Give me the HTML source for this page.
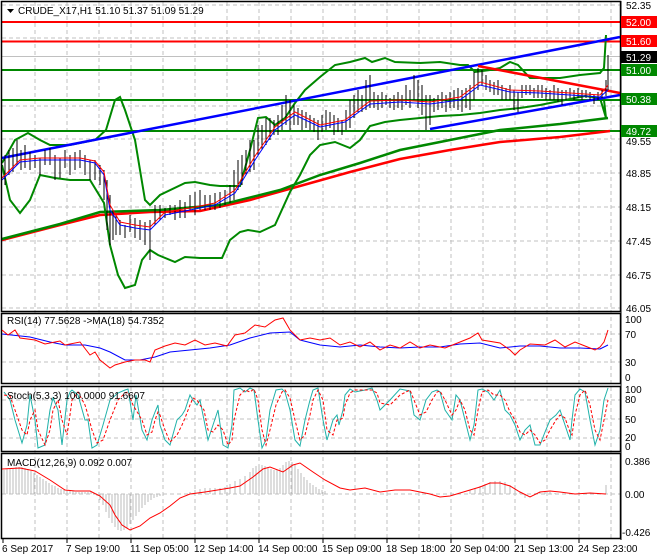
<!DOCTYPE html>
<html><head><meta charset="utf-8"><style>
html,body{margin:0;padding:0;background:#fff;width:660px;height:560px;overflow:hidden}
svg text{font-family:"Liberation Sans",sans-serif;font-size:10px;fill:#000}
</style></head><body>
<svg width="660" height="560" viewBox="0 0 660 560" xmlns="http://www.w3.org/2000/svg">
<rect width="660" height="560" fill="#fff"/>
<!-- grid -->
<g stroke="#c0c0c0" stroke-dasharray="4,3" stroke-width="1">
<path d="M35 2V539M67 2V539M99 2V539M131 2V539M163 2V539M195 2V539M227 2V539M259 2V539M291 2V539M323 2V539M355 2V539M387 2V539M419 2V539M451 2V539M483 2V539M515 2V539M547 2V539M579 2V539M611 2V539"/>
<path d="M2 5H620M2 38H620M2 106H620M2 139H620M2 173H620M2 207H620M2 241H620M2 275H620M2 308H620"/>
<path d="M2 334H620M2 362H620M2 400H620M2 419H620M2 438H620M2 494H620"/>
</g>
<line x1="2" y1="56.5" x2="620" y2="56.5" stroke="#c0c0c0"/>
<!-- levels -->
<g stroke-width="2">
<line x1="2" y1="22" x2="620" y2="22" stroke="#f00"/>
<line x1="2" y1="41.5" x2="620" y2="41.5" stroke="#f00"/>
<line x1="2" y1="70" x2="620" y2="70" stroke="#080"/>
<line x1="2" y1="100" x2="620" y2="100" stroke="#080"/>
<line x1="2" y1="131" x2="620" y2="131" stroke="#080"/>
</g>
<!-- MAs -->
<polyline fill="none" stroke="#f00" stroke-width="2.5" points="2,240 60,225 100,215 150,212 200,211 250,200 300,186 350,172 400,159 450,150 500,142 560,137 610,131"/>
<polyline fill="none" stroke="#080" stroke-width="2.5" points="2,239 60,224 100,212 160,210 220,205 280,190 320,175 360,163 400,150 450,140 500,130 560,124 608,118"/>
<!-- bollinger -->
<polyline fill="none" stroke="#080" stroke-width="2" points="2,163 15,140 28,133 40,140 50,145 70,145 95,140 106,130 115,100 120,97 125,110 135,140 145,200 150,205 160,195 185,183 195,182 210,185 220,186 240,186 250,150 258,118 266,117 275,125 285,118 295,103 305,90 320,77 335,65 350,62 365,58 372,62 385,58 395,62 420,63 440,62 460,65 468,65 475,72 490,70 500,68 510,62 518,65 530,78 545,78 560,78 580,75 600,73 604,68 606,35"/>
<polyline fill="none" stroke="#080" stroke-width="2" points="2,165 10,200 20,213 30,200 40,175 55,178 70,180 90,180 104,203 110,245 118,275 125,288 135,285 142,260 150,250 158,255 175,262 185,257 200,258 215,258 222,258 230,240 240,232 248,230 260,232 275,225 290,192 300,175 310,155 320,145 335,142 350,148 360,140 370,126 385,122 400,120 420,118 440,116 460,115 480,113 500,110 520,108 540,105 560,101 585,96 600,98 606,118 604,100"/>
<!-- trendlines -->
<line x1="2" y1="158" x2="620" y2="37" stroke="#00f" stroke-width="2.5"/>
<line x1="430" y1="129" x2="620" y2="95" stroke="#00f" stroke-width="2.5"/>
<line x1="478" y1="66" x2="620" y2="93" stroke="#f00" stroke-width="2.5"/>
<!-- candles -->
<g stroke="#000" stroke-width="1">
<path d="M5 155V185M9 150V175M13 148V172M17 140V165M21 150V170M25 145V168M30 152V170M35 155V168M40 158V175M45 150V165M50 148V165M55 155V180M60 158V178M65 150V168M70 155V175M75 152V170M80 150V168M85 155V175M90 160V180M95 160V180M100 165V185M104 170V200M107 180V230M110 195V245M113 210V240M116 215V235M120 220V235M125 225V238M130 215V232M135 218V238M140 220V240M145 222V245M150 220V260M155 205V225M160 205V220M165 208V218M170 205V215M175 205V220M180 200V218M185 202V218M190 195V210M195 192V215M200 190V210M205 195V210M210 195V210M215 193V210M220 192V208M225 190V205M230 185V203M234 170V200M238 160V190M242 155V185M246 150V175M250 140V172M254 140V170M258 125V155M262 125V150M266 118V145M270 118V140M274 120V135M278 115V135M282 105V130M286 95V125M290 100V130M294 105V125M298 108V125M302 110V130M306 112V128M310 115V130M314 118V132M318 120V140M322 115V132M326 110V130M330 112V128M334 115V135M338 118V132M342 120V135M346 110V130M350 100V128M354 95V118M358 90V112M362 95V112M366 80V110M370 75V108M374 92V108M378 95V110M382 92V108M386 95V105M390 98V108M394 95V110M398 92V108M402 95V110M406 85V105M410 90V108M414 75V100M418 80V108M422 85V115M426 95V130M430 95V125M434 98V112M438 95V110M442 92V108M446 95V112M450 92V108M454 90V108M458 88V110M462 90V112M466 88V108M470 85V110M474 72V100M478 68V90M482 70V85M486 75V90M490 80V92M494 82V95M498 80V95M502 85V100M506 88V100M510 85V100M514 90V110M518 92V112M522 85V98M526 85V95M530 85V95M534 88V98M538 85V98M542 85V98M546 88V100M550 90V100M554 85V100M558 88V102M562 90V105M566 90V100M570 88V98M574 90V100M578 88V98M582 90V100M586 90V98M590 92V100M594 95V104M598 92V100M602 90V98M606 80V96M608 55V90"/>
</g>
<polyline fill="none" stroke="#00f" stroke-width="1" points="2,180 20,162 40,160 60,160 80,160 95,163 104,175 110,210 120,225 135,228 150,230 165,215 190,210 215,205 235,193 255,160 275,130 295,115 320,127 345,122 370,104 400,102 430,104 460,100 480,85 510,92 540,93 570,95 600,97 608,90"/>
<polyline fill="none" stroke="#f00" stroke-width="1" points="2,178 20,160 40,158 60,158 80,158 95,161 104,172 110,205 120,222 135,225 150,227 165,212 190,208 215,203 235,190 255,156 275,127 295,112 320,125 345,120 370,101 400,100 430,102 460,97 480,82 510,90 540,91 570,93 600,95 608,85"/>
<!-- frames -->
<g fill="none" stroke="#000" stroke-width="1.5">
<rect x="1.5" y="1.5" width="619" height="310"/>
<rect x="1.5" y="313.5" width="619" height="70"/>
<rect x="1.5" y="386.5" width="619" height="65"/>
<rect x="1.5" y="453.5" width="619" height="85"/>
</g>
<line x1="621" y1="1" x2="621" y2="540" stroke="#000"/>
<!-- header -->
<path d="M7 9L14 9L10.5 13Z" fill="#000"/>
<text x="18" y="14">CRUDE_X17,H1  51.10 51.37 51.09 51.29</text>
<!-- price labels -->
<g font-size="10">
<text x="626" y="9">52.35</text>
<text x="626" y="145">49.55</text>
<text x="626" y="177">48.85</text>
<text x="626" y="211">48.15</text>
<text x="626" y="245">47.45</text>
<text x="626" y="279">46.75</text>
<text x="626" y="312">46.05</text>
</g>
<rect x="621" y="16" width="36" height="12" fill="#f00"/><text x="626" y="26" style="fill:#fff">52.00</text>
<rect x="621" y="35" width="36" height="12" fill="#f00"/><text x="626" y="45" style="fill:#fff">51.60</text>
<rect x="621" y="51" width="36" height="12" fill="#000"/><text x="626" y="61" style="fill:#fff">51.29</text>
<rect x="621" y="64" width="36" height="12" fill="#080"/><text x="626" y="74" style="fill:#fff">51.00</text>
<rect x="621" y="93" width="36" height="12" fill="#080"/><text x="626" y="103" style="fill:#fff">50.38</text>
<rect x="621" y="125" width="36" height="12" fill="#080"/><text x="626" y="135" style="fill:#fff">49.72</text>
<!-- RSI -->
<text x="7" y="324">RSI(14) 77.5628  -&gt;MA(18) 54.7352</text>
<polyline fill="none" stroke="#00f" points="2,334 30,337 50,342 65,345 85,345 100,348 110,352 125,360 140,360 155,357 170,352 190,350 210,348 230,345 250,338 270,333 290,332 300,340 320,345 340,347 360,345 380,347 400,348 420,347 440,347 460,344 480,343 500,348 520,346 540,346 560,348 580,348 600,349 608,345"/>
<polyline fill="none" stroke="#f00" points="2,330 8,335 15,330 20,338 35,340 45,344 60,341 65,345 80,342 90,355 95,352 100,360 110,368 115,365 125,362 135,360 145,360 150,362 155,350 165,346 175,343 185,345 195,340 205,345 215,343 227,346 235,335 245,333 255,325 265,327 275,320 283,318 290,330 300,340 310,338 320,340 330,338 340,345 350,342 360,347 370,342 380,350 390,345 400,348 410,342 420,348 430,345 445,348 460,342 470,338 478,333 482,340 500,343 510,350 515,355 520,350 530,344 545,345 555,340 565,347 575,342 585,346 595,350 600,347 604,342 608,330"/>
<g font-size="10"><text x="625" y="323">100</text><text x="625" y="338">70</text><text x="625" y="366">30</text><text x="625" y="381">0</text></g>
<!-- Stoch -->
<polyline fill="none" stroke="#20b2aa" points="4,392 10,400 15,420 22,443 27,425 30,395 35,420 38,448 45,445 50,410 53,398 58,410 62,445 67,400 70,392 72,390 78,395 85,420 88,420 92,448 97,445 103,425 110,400 118,393 125,390 128,389 133,420 136,395 142,430 147,440 152,420 155,412 158,405 160,425 165,440 170,445 177,420 182,415 185,410 190,395 193,400 197,405 200,400 204,420 208,440 213,425 218,410 223,445 228,448 232,425 234,390 240,388 245,392 250,388 254,390 258,420 262,448 266,440 270,410 276,390 282,389 285,392 290,410 295,440 300,446 305,420 310,400 313,390 318,388 323,420 327,440 333,420 337,415 339,425 343,410 345,395 350,389 355,392 365,390 372,388 377,400 380,410 390,400 400,389 410,391 414,415 420,420 426,400 432,392 437,390 440,392 445,410 452,420 456,395 460,400 465,420 470,440 474,425 478,390 482,389 488,392 494,400 500,390 505,410 510,415 515,425 520,440 525,430 530,425 535,445 540,445 545,432 550,420 556,415 560,410 565,425 570,440 572,420 575,395 580,389 585,392 590,420 595,445 600,430 604,400 608,388"/>
<polyline fill="none" stroke="#f00" stroke-dasharray="3,2" points="4,395 10,396 15,410 22,430 27,435 30,420 35,410 38,430 45,445 50,430 53,410 58,400 62,420 67,435 70,415 72,400 78,392 85,405 88,415 92,430 97,443 103,440 110,420 118,400 125,393 128,392 133,405 136,410 142,420 147,435 152,432 155,420 158,412 160,415 165,430 170,442 177,435 182,425 185,418 190,405 193,398 197,400 200,405 204,410 208,430 213,432 218,425 223,430 228,445 232,440 234,420 240,395 245,390 250,392 254,389 258,400 262,430 266,445 270,430 276,405 282,392 285,390 290,398 295,420 300,440 305,435 310,415 313,400 318,390 323,400 327,430 333,435 337,420 339,420 343,418 345,405 350,393 355,390 365,390 372,390 377,393 380,403 390,405 400,395 410,390 414,400 420,415 426,412 432,400 437,392 440,391 445,400 452,415 456,410 460,400 465,410 470,430 474,435 478,410 482,392 488,390 494,395 500,395 505,400 510,412 515,420 520,432 525,435 530,430 535,435 540,443 545,440 550,430 556,420 560,415 565,418 570,432 572,435 575,415 580,395 585,390 590,405 595,430 600,440 604,420 608,400"/>
<g font-size="10"><text x="7" y="399">Stoch(5,3,3) 100.0000 91.6607</text>
<text x="625" y="393">100</text><text x="625" y="403">80</text><text x="625" y="423">50</text><text x="625" y="441">20</text><text x="625" y="450">0</text></g>
<!-- MACD -->
<g stroke="#bbb" stroke-width="1">
<path d="M4 494V470M7 494V469M10 494V469M13 494V468M16 494V467M19 494V467M22 494V467M25 494V468M28 494V469M31 494V471M34 494V473M37 494V475M40 494V477M43 494V479M46 494V481M49 494V483M52 494V485M55 494V486M58 494V488M61 494V489M64 494V490M67 494V490M70 494V491M73 494V491M76 494V492M79 494V492M82 494V492M85 494V492M88 494V492M91 494V492M94 494V493M97 494V496M100 494V500M103 494V505M106 494V512M109 494V518M112 494V523M115 494V527M118 494V530M121 494V531M124 494V530M127 494V528M130 494V524M133 494V520M136 494V516M139 494V512M142 494V508M145 494V505M148 494V502M151 494V500M154 494V498M157 494V497M160 494V496M163 494V495M190 494V492M195 494V490M200 494V489M205 494V488M210 494V488M215 494V488M220 494V488M225 494V487M230 494V484M235 494V481M240 494V479M245 494V476M250 494V472M253 494V468M256 494V466M259 494V465M262 494V465M265 494V466M268 494V467M271 494V469M274 494V470M277 494V470M280 494V468M283 494V465M286 494V462M289 494V461M292 494V462M295 494V465M298 494V469M301 494V473M304 494V477M307 494V480M310 494V483M313 494V485M316 494V487M319 494V489M322 494V490M325 494V491M470 494V490M475 494V488M480 494V486M485 494V484M490 494V482M495 494V481M500 494V481M505 494V482M510 494V485M515 494V488M520 494V492M525 494V498M530 494V494M535 494V493M540 494V492M545 494V491M550 494V492M555 494V493M560 494V494M606 494V485"/>
</g>
<polyline fill="none" stroke="#f00" stroke-width="1" points="2,469 20,468 35,471 50,480 65,490 75,491 90,491 100,496 110,505 115,515 122,525 130,530 140,526 150,518 160,513 170,506 180,498 190,494 205,492 230,488 240,486 253,477 263,469 270,467 283,472 293,465 300,463 313,472 325,480 340,488 350,490 365,488 380,492 395,490 410,490 430,494 440,497 450,496 460,493 480,487 490,483 500,483 510,486 520,492 530,497 540,492 550,491 560,492 575,494 590,493 606,494"/>
<g font-size="10"><text x="7" y="466">MACD(12,26,9) 0.092 0.007</text>
<text x="625" y="465">0.386</text><text x="625" y="498">0.00</text><text x="622" y="536">-0.426</text></g>
<!-- time axis -->
<g stroke="#000"><path d="M3 539V543M67 539V543M131 539V543M195 539V543M259 539V543M323 539V543M387 539V543M451 539V543M515 539V543M579 539V543"/></g>
<g font-size="10">
<text x="2" y="552">6 Sep 2017</text><text x="66" y="552">7 Sep 19:00</text><text x="130" y="552">11 Sep 05:00</text><text x="194" y="552">12 Sep 14:00</text><text x="258" y="552">14 Sep 00:00</text><text x="322" y="552">15 Sep 09:00</text><text x="386" y="552">18 Sep 18:00</text><text x="450" y="552">20 Sep 04:00</text><text x="514" y="552">21 Sep 13:00</text><text x="578" y="552">24 Sep 23:00</text>
</g>
</svg>
</body></html>
